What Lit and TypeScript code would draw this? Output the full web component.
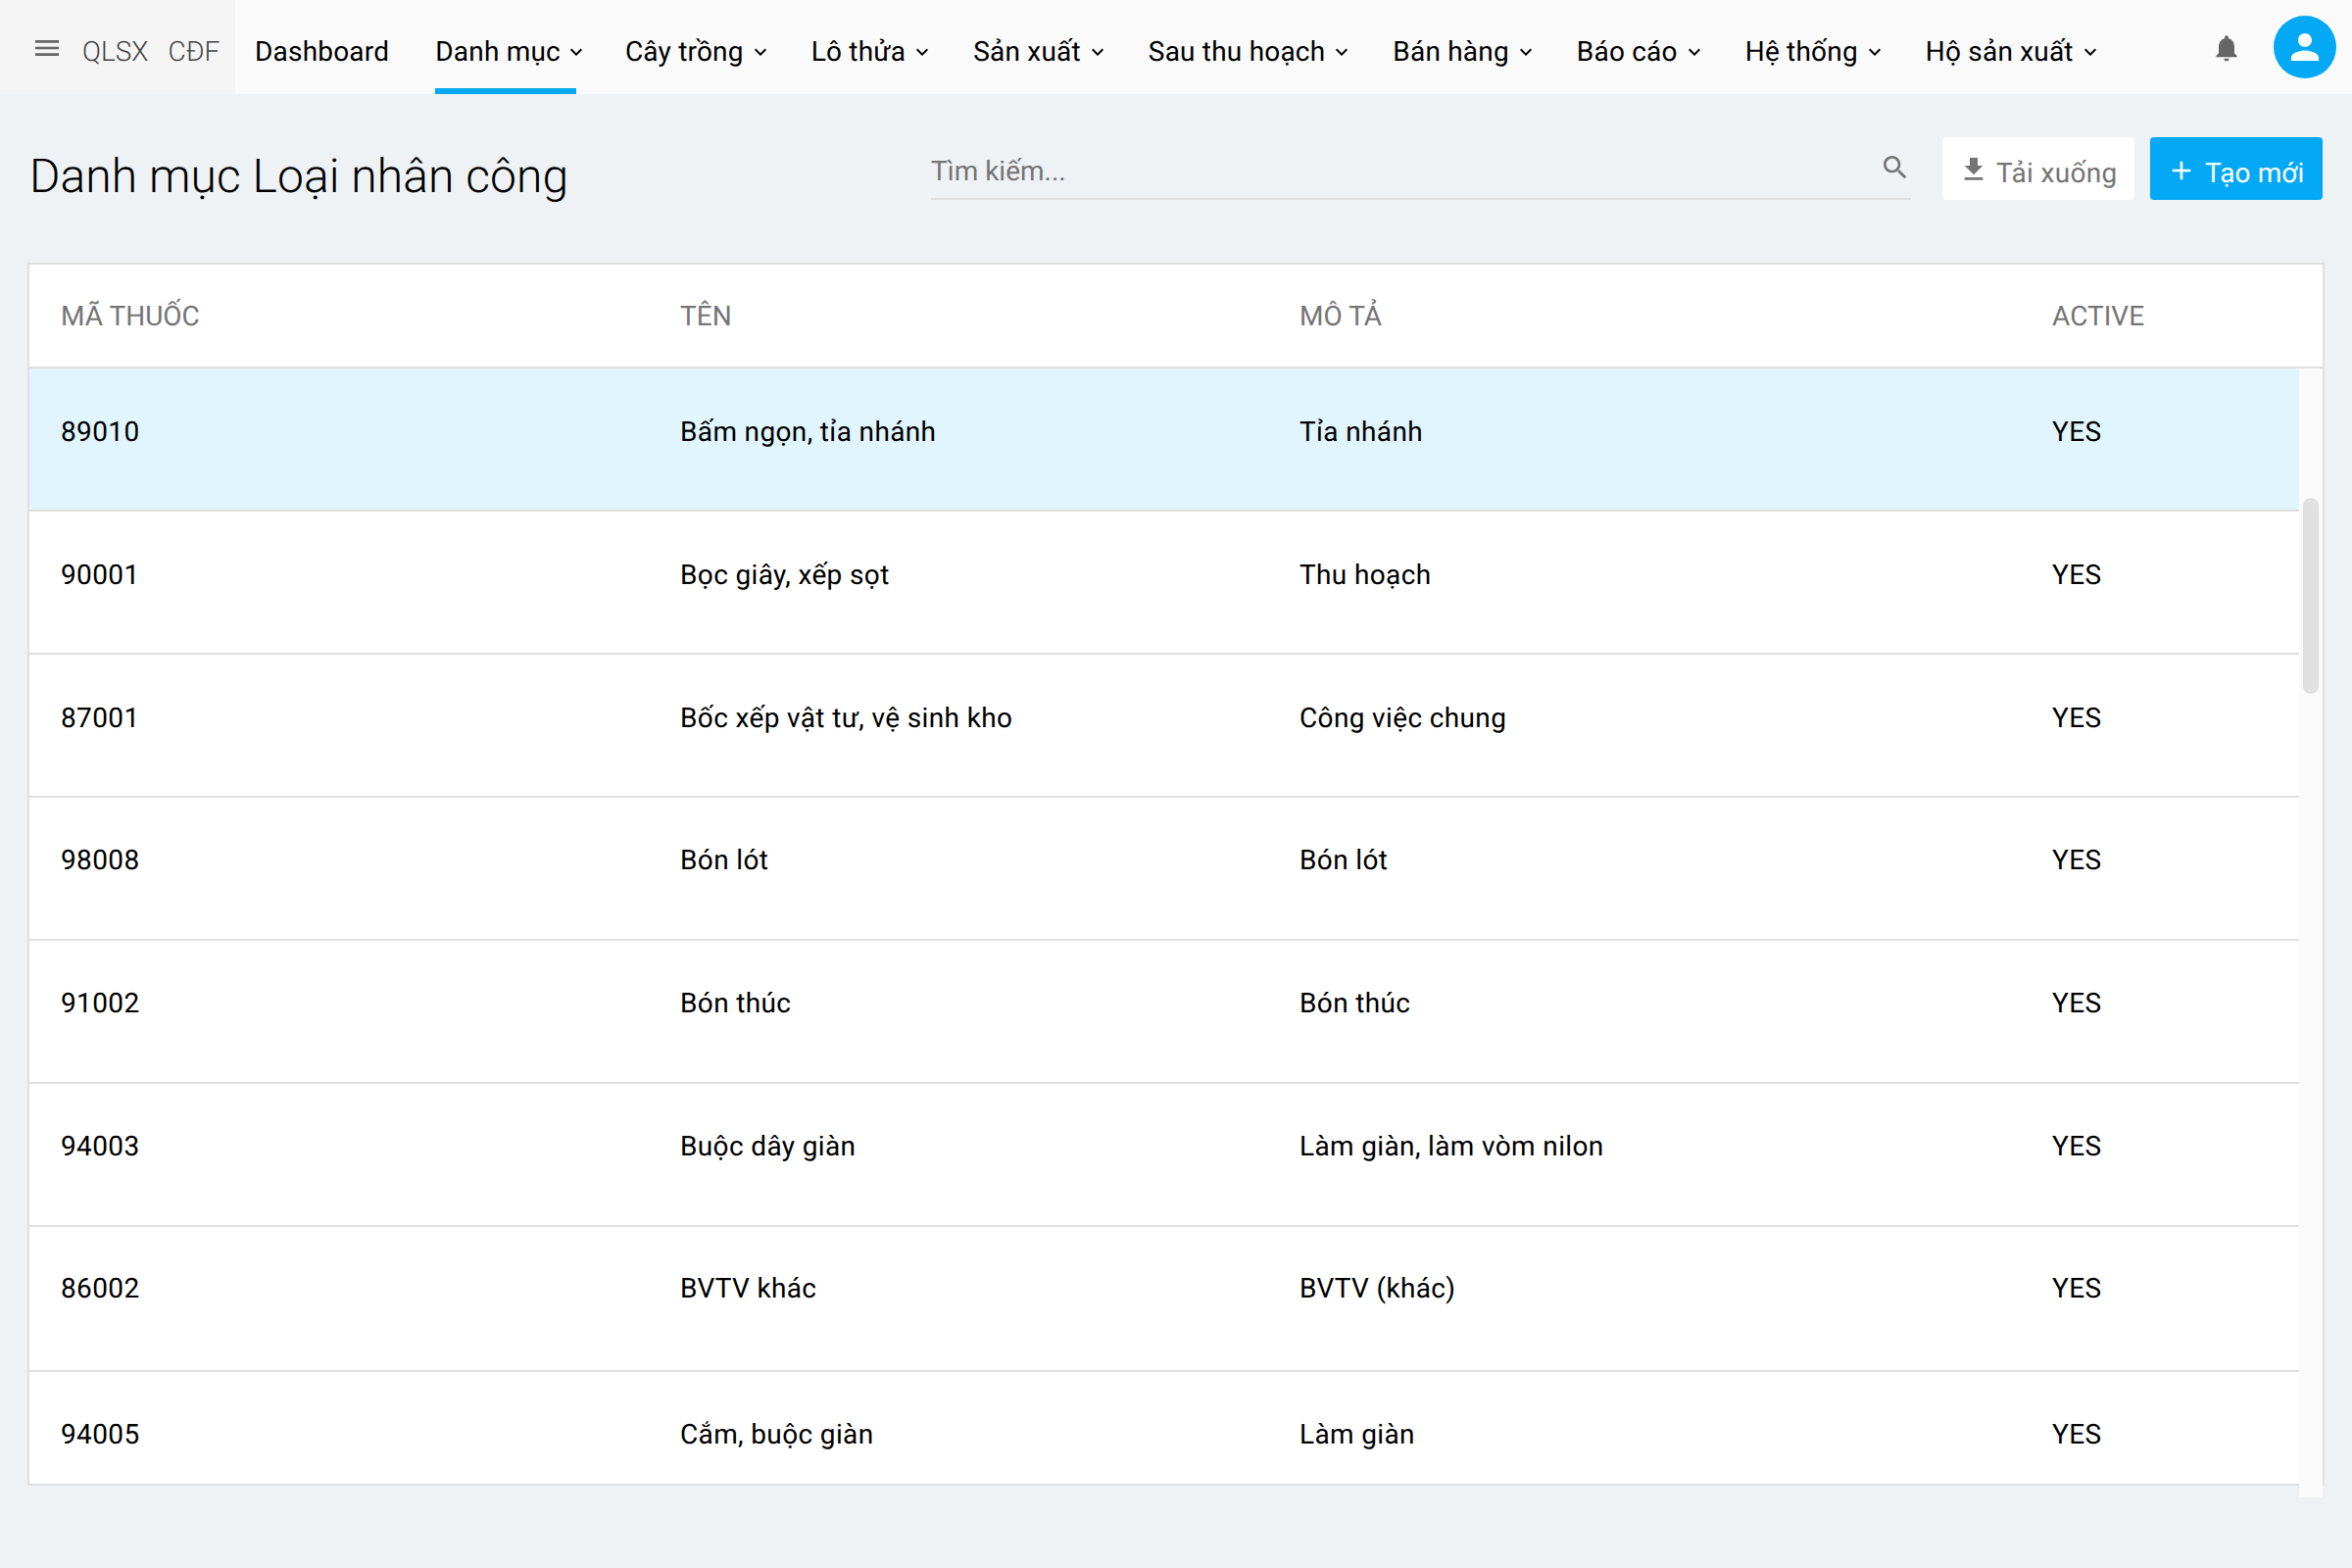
import { LitElement, html, css, svg } from 'lit';
import { customElement } from 'lit/decorators.js';

const NAV = [
  { label: 'Dashboard' },
  { label: 'Danh mục', menu: true, active: true },
  { label: 'Cây trồng', menu: true },
  { label: 'Lô thửa', menu: true },
  { label: 'Sản xuất', menu: true },
  { label: 'Sau thu hoạch', menu: true },
  { label: 'Bán hàng', menu: true },
  { label: 'Báo cáo', menu: true },
  { label: 'Hệ thống', menu: true },
  { label: 'Hộ sản xuất', menu: true },
];

const ROWS = [
  ['89010', 'Bấm ngọn, tỉa nhánh', 'Tỉa nhánh', 'YES'],
  ['90001', 'Bọc giây, xếp sọt', 'Thu hoạch', 'YES'],
  ['87001', 'Bốc xếp vật tư, vệ sinh kho', 'Công việc chung', 'YES'],
  ['98008', 'Bón lót', 'Bón lót', 'YES'],
  ['91002', 'Bón thúc', 'Bón thúc', 'YES'],
  ['94003', 'Buộc dây giàn', 'Làm giàn, làm vòm nilon', 'YES'],
  ['86002', 'BVTV khác', 'BVTV (khác)', 'YES'],
  ['94005', 'Cắm, buộc giàn', 'Làm giàn', 'YES'],
];

const icon = (path: unknown, cls = '') =>
  html`<svg class=${cls} viewBox="0 0 24 24" fill="currentColor">${path}</svg>`;

const chevron = svg`<path d="M7.41 8.59 12 13.17l4.59-4.58L18 10l-6 6-6-6z"/>`;
const menu = svg`<path d="M3 18h18v-2H3v2zm0-5h18v-2H3v2zm0-7v2h18V6H3z"/>`;
const bell = svg`<path d="M12 22c1.1 0 2-.9 2-2h-4c0 1.1.9 2 2 2zm6-6v-5c0-3.07-1.63-5.64-4.5-6.32V4c0-.83-.67-1.5-1.5-1.5s-1.5.67-1.5 1.5v.68C7.64 5.36 6 7.92 6 11v5l-2 2v1h16v-1l-2-2z"/>`;
const person = svg`<path d="M12 12c2.21 0 4-1.79 4-4s-1.79-4-4-4-4 1.79-4 4 1.79 4 4 4zm0 2c-2.67 0-8 1.34-8 4v2h16v-2c0-2.66-5.33-4-8-4z"/>`;
const search = svg`<path d="M15.5 14h-.79l-.28-.27C15.41 12.59 16 11.11 16 9.5 16 5.91 13.09 3 9.5 3S3 5.91 3 9.5 5.91 16 9.5 16c1.61 0 3.09-.59 4.23-1.57l.27.28v.79l5 4.99L20.49 19l-4.99-5zm-6 0C7.01 14 5 11.99 5 9.5S7.01 5 9.5 5 14 7.01 14 9.5 11.99 14 9.5 14z"/>`;
const download = svg`<path d="M19 9h-4V3H9v6H5l7 7 7-7zM5 18v2h14v-2H5z"/>`;
const plus = svg`<path d="M19 13h-6v6h-2v-6H5v-2h6V5h2v6h6v2z"/>`;

@customElement('app-root')
export class AppRoot extends LitElement {
  static styles = css`
    :host {
      display: block;
      width: 2400px;
      height: 1600px;
      background: #eef2f5;
      font-family: Roboto, 'Noto Sans', sans-serif;
      font-size: 28px;
      color: #000;
      overflow: hidden;
      text-rendering: geometricPrecision;
    }
    svg {
      display: block;
      flex: none;
    }
    .topbar {
      display: flex;
      align-items: center;
      height: 96px;
      background: #fafafa;
    }
    .brand {
      display: flex;
      align-items: center;
      width: 240px;
      height: 100%;
      padding: 9px 0 0 32px;
      box-sizing: border-box;
      background: #f5f5f5;
      color: #444;
      font-weight: 300;
    }
    .brand svg {
      width: 32px;
      height: 32px;
      margin: -7px 20px 0 0;
      color: #666;
    }
    .brand span + span {
      margin-left: 20px;
    }
    .nav {
      display: flex;
      gap: 49px;
      height: 100%;
      margin-left: 20px;
      letter-spacing: 0.2px;
    }
    .nav-item {
      display: flex;
      align-items: center;
      height: 100%;
      padding-top: 9px;
      box-sizing: border-box;
    }
    .nav-item:first-child {
      margin-right: -2px;
    }
    .nav-item.active {
      margin-right: 1px;
      border-bottom: 6px solid #03a9f4;
      padding-top: 15px;
    }
    .nav-item svg {
      width: 24px;
      height: 24px;
      margin-left: 5px;
      margin-right: -9px;
    }
    .nav-item.active svg {
      margin-left: 4px;
      margin-right: -12px;
    }
    .top-actions {
      display: flex;
      align-items: center;
      margin-left: auto;
      padding-right: 16px;
    }
    .bell {
      width: 32px;
      height: 32px;
      color: #666;
      margin: 1px 32px 0 0;
    }
    .avatar {
      display: flex;
      align-items: center;
      justify-content: center;
      width: 64px;
      height: 64px;
      border-radius: 50%;
      background: #03a9f4;
      color: #fff;
    }
    .avatar svg {
      width: 42px;
      height: 42px;
    }
    .page-head {
      display: flex;
      align-items: flex-start;
      height: 172px;
      padding: 44px 30px 0 30px;
      box-sizing: border-box;
    }
    h1 {
      margin: 0;
      width: 920px;
      font-size: 48px;
      font-weight: 300;
      line-height: 80px;
      letter-spacing: 0.06px;
    }
    .search {
      display: flex;
      align-items: center;
      justify-content: space-between;
      width: 1000px;
      height: 64px;
      box-sizing: border-box;
      border-bottom: 2px solid #e0e0e0;
      color: #757575;
    }
    .search svg {
      width: 32px;
      height: 32px;
    }
    .search span {
      margin-top: 6px;
    }
    .btn {
      display: flex;
      align-items: center;
      height: 64px;
      padding-top: 8px;
      box-sizing: border-box;
      border-radius: 4px;
    }
    .btn svg {
      width: 32px;
      height: 32px;
    }
    .btn.download {
      width: 196px;
      margin-left: 32px;
      padding-left: 16px;
      background: #fff;
      color: #757575;
      letter-spacing: 0.33px;
    }
    .btn.download svg {
      margin: -6px 7px 0 0;
    }
    .btn.create {
      width: 176px;
      margin-left: 16px;
      padding-left: 16px;
      background: #03a9f4;
      color: #fff;
      letter-spacing: 0.1px;
    }
    .btn.create svg {
      margin: -4px 8px 0 0;
    }
    .table {
      position: relative;
      width: 2344px;
      height: 1248px;
      margin-left: 28px;
      box-sizing: border-box;
      border: 2px solid #e0e0e0;
      background: #fff;
    }
    .row {
      display: grid;
      grid-template-columns: 632px 632px 767px 1fr;
      align-items: center;
      box-sizing: border-box;
      height: 146px;
      padding-bottom: 16px;
      border-bottom: 2px solid #e0e0e0;
      letter-spacing: 0.36px;
    }
    .row > div {
      padding-left: 32px;
    }
    .row > div:last-child {
      padding-left: 33px;
    }
    .row.head {
      width: 2340px;
      height: 106px;
      padding-bottom: 0;
      color: #757575;
      letter-spacing: 0.02px;
    }
    .row.selected {
      background: #e1f5fe;
    }
    .body {
      width: 2316px;
      height: 1140px;
      overflow: hidden;
    }
    .body .row:nth-child(n + 4) {
      padding-bottom: 18px;
    }
    .body .row:nth-child(7) {
      height: 148px;
      padding-bottom: 21px;
    }
    .track {
      position: absolute;
      top: 106px;
      right: 0;
      width: 24px;
      height: 1152px;
      background: #fafafa;
    }
    .thumb {
      width: 16px;
      height: 200px;
      margin: 132px 0 0 4px;
      border-radius: 8px;
      background: #e0e0e0;
    }
  `;

  render() {
    return html`
      <header class="topbar">
        <div class="brand">
          ${icon(menu)}
          <span>QLSX</span><span>CĐF</span>
        </div>
        <nav class="nav">
          ${NAV.map(
            (item) => html`
              <div class="nav-item ${item.active ? 'active' : ''}">
                ${item.label}${item.menu ? icon(chevron) : ''}
              </div>
            `
          )}
        </nav>
        <div class="top-actions">
          ${icon(bell, 'bell')}
          <div class="avatar">${icon(person)}</div>
        </div>
      </header>
      <section class="page-head">
        <h1>Danh mục Loại nhân công</h1>
        <div class="search"><span>Tìm kiếm...</span>${icon(search)}</div>
        <div class="btn download">${icon(download)}Tải xuống</div>
        <div class="btn create">${icon(plus)}Tạo mới</div>
      </section>
      <section class="table">
        <div class="row head">
          <div>MÃ THUỐC</div>
          <div>TÊN</div>
          <div>MÔ TẢ</div>
          <div>ACTIVE</div>
        </div>
        <div class="body">
          ${ROWS.map(
            (r, i) => html`
              <div class="row ${i === 0 ? 'selected' : ''}">
                ${r.map((c) => html`<div>${c}</div>`)}
              </div>
            `
          )}
        </div>
        <div class="track"><div class="thumb"></div></div>
      </section>
    `;
  }
}
